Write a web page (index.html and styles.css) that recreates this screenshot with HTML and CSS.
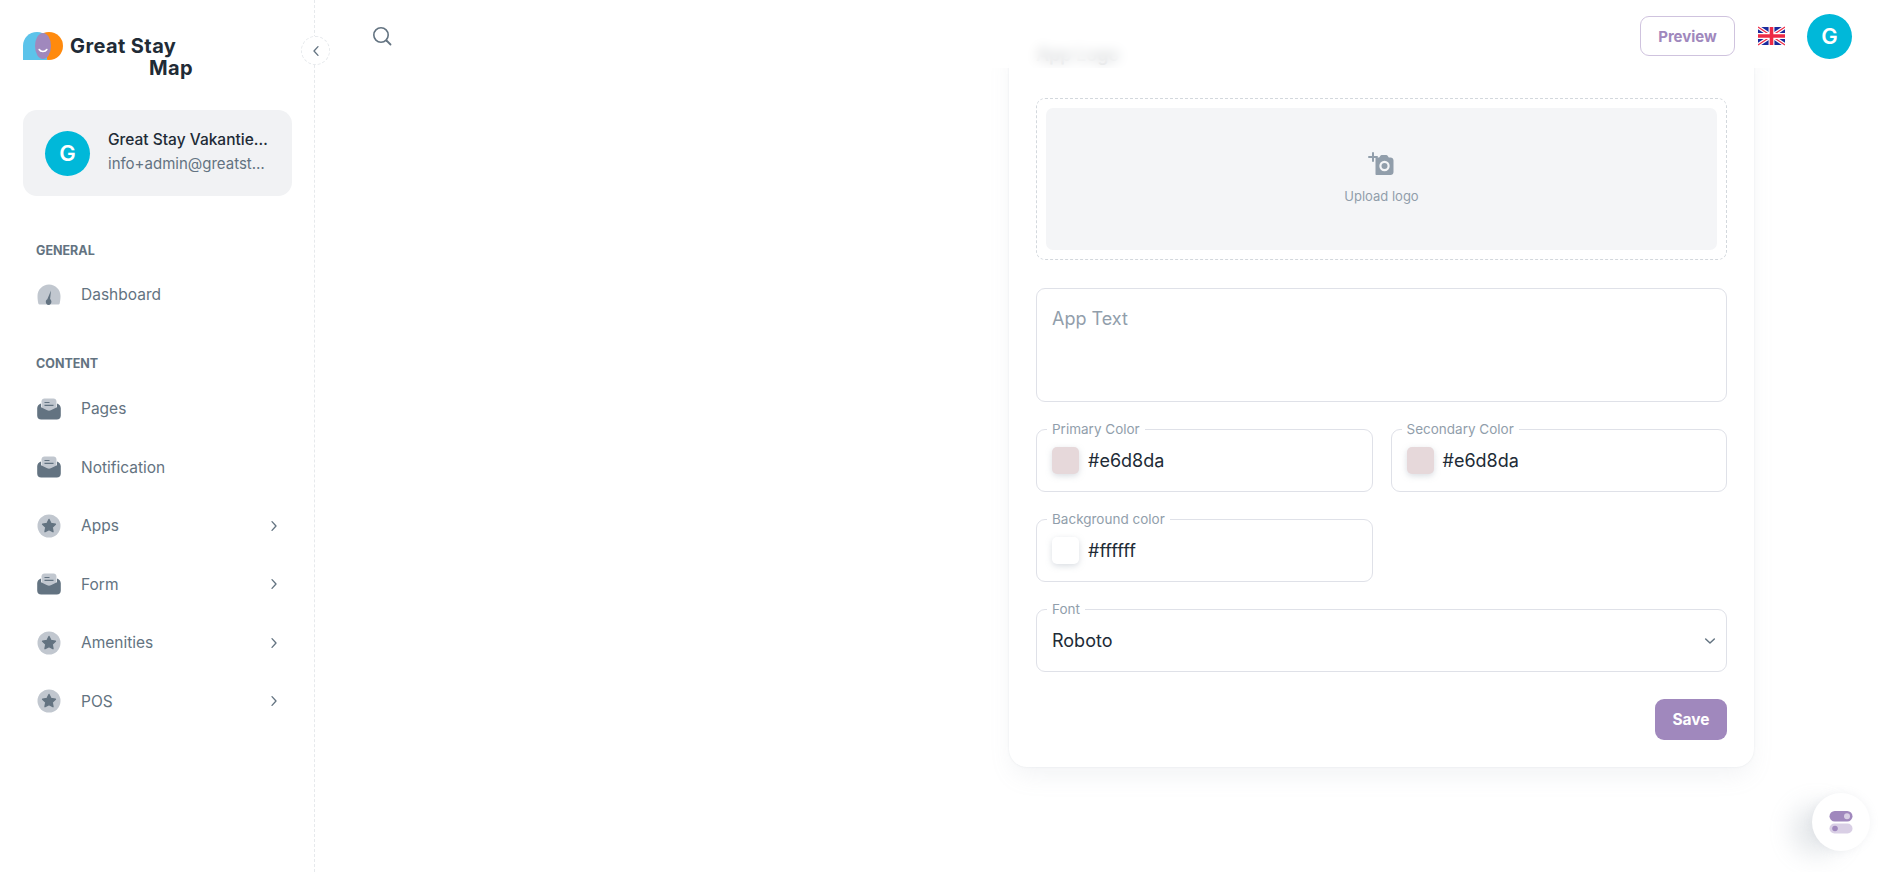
FILE: index.html
```html
<!DOCTYPE html>
<html lang="en">
<head>
    <meta charset="UTF-8">
    <meta name="viewport" content="width=device-width, initial-scale=1.0">
    <title>Great Stay Map</title>
    <link rel="stylesheet" href="styles.css">
</head>
<body>
    <svg class="icon-defs" width="0" height="0">
        <symbol id="icon-inbox" viewBox="0 0 24 24">
            <path fill="#c1c7cf" d="M4.500 4.500C4.500 2.800 5.800 1.500 7.500 1.500h9c1.700 0 3 1.300 3 3V15h-15z"/>
            <path fill="#637381" d="M7.500 5h5v1.100h-5zM7.500 7.800h9v1.100h-9z"/>
            <path fill="#637381" d="M4 6.500v3.800l6.200 3c1.100.6 2.500.6 3.600 0l6.200-3V6.500c2.200 1 3.800 2.400 3.800 4.700v7.300c0 2.500-1.500 4-4 4H4.200c-2.500 0-4-1.500-4-4v-7.300c0-2.300 1.600-3.700 3.800-4.700z"/>
        </symbol>
        <symbol id="icon-star" viewBox="0 0 24 24">
            <circle cx="12" cy="12" r="11.500" fill="#c1c7cf"/>
            <path fill="#637381" stroke="#637381" stroke-width="1.400" stroke-linejoin="round" d="M12 5.500l2 4 4.400.7-3.200 3.100.8 4.400-4-2.100-4 2.100.8-4.400-3.200-3.100 4.400-.7z"/>
        </symbol>
        <symbol id="icon-chevron" viewBox="0 0 24 24">
            <path fill="none" stroke="#637381" stroke-width="2" stroke-linecap="round" stroke-linejoin="round" d="M9 5.500l6 6.500-6 6.500"/>
        </symbol>
    </svg>

    <aside class="sidebar">
        <div class="brand">
            <svg class="brand-logo" width="40" height="28" viewBox="0 0 40 28">
                <path fill="#ff8a0d" d="M26 0a14 14 0 1 1 0 28 14 14 0 0 1 0-28z"/>
                <path fill="#5cc3ea" d="M14 0c4 0 8 2 10 4v24H0V14C0 6 6 0 14 0z"/>
                <ellipse cx="20" cy="14" rx="8" ry="13" fill="#a088bd"/>
                <path fill="none" stroke="#fff" stroke-width="1.600" stroke-linecap="round" d="M16.200 17.500c1.500 2.700 6 2.700 7.600 0"/>
            </svg>
            <div class="brand-name">
                <div>Great Stay</div>
                <div class="brand-line2">Map</div>
            </div>
        </div>

        <div class="account">
            <div class="avatar">G</div>
            <div class="account-text">
                <div class="account-name">Great Stay Vakantie Verhuur</div>
                <div class="account-mail">info+admin@greatstaymap.com</div>
            </div>
        </div>

        <nav class="nav">
            <div class="nav-title">GENERAL</div>
            <a class="nav-item">
                <svg class="nav-icon" viewBox="0 0 24 24">
                    <path fill="#c1c7cf" d="M12 1.500C5.600 1.500.5 6.700.5 13c0 3 .4 6 .9 7.800.2.500.6.700 1.100.7h19c.5 0 .9-.2 1.100-.7.5-1.800.9-4.800.9-7.800 0-6.300-5.100-11.500-11.500-11.500z"/>
                    <path fill="#637381" d="M14 7.500l-.9 8.600c.8.600 1.300 1.600 1.300 2.700 0 1.800-1.200 3.200-2.800 3.200s-2.800-1.400-2.800-3.200c0-1.100.6-2.100 1.500-2.600z"/>
                </svg>
                <span>Dashboard</span>
            </a>

            <div class="nav-title nav-title-next">CONTENT</div>
            <a class="nav-item">
                <svg class="nav-icon"><use href="#icon-inbox"/></svg>
                <span>Pages</span>
            </a>
            <a class="nav-item">
                <svg class="nav-icon"><use href="#icon-inbox"/></svg>
                <span>Notification</span>
            </a>
            <a class="nav-item">
                <svg class="nav-icon"><use href="#icon-star"/></svg>
                <span>Apps</span>
                <svg class="nav-arrow"><use href="#icon-chevron"/></svg>
            </a>
            <a class="nav-item">
                <svg class="nav-icon"><use href="#icon-inbox"/></svg>
                <span>Form</span>
                <svg class="nav-arrow"><use href="#icon-chevron"/></svg>
            </a>
            <a class="nav-item">
                <svg class="nav-icon"><use href="#icon-star"/></svg>
                <span>Amenities</span>
                <svg class="nav-arrow"><use href="#icon-chevron"/></svg>
            </a>
            <a class="nav-item">
                <svg class="nav-icon"><use href="#icon-star"/></svg>
                <span>POS</span>
                <svg class="nav-arrow"><use href="#icon-chevron"/></svg>
            </a>
        </nav>

        <button class="collapse" type="button" aria-label="Collapse">
            <svg width="16" height="16" viewBox="0 0 24 24">
                <path fill="none" stroke="#637381" stroke-width="2" stroke-linecap="round" stroke-linejoin="round" d="M15 5.500L9 12l6 6.500"/>
            </svg>
        </button>
    </aside>

    <main class="main">
        <header class="topbar">
            <svg width="20" height="20" viewBox="0 0 20 20">
                <circle cx="9" cy="9" r="7.200" fill="none" stroke="#637381" stroke-width="1.600"/>
                <path d="M14.500 14.500L18.500 18.500" stroke="#637381" stroke-width="1.800" stroke-linecap="round"/>
            </svg>
            <div class="topbar-right">
                <button class="btn-preview" type="button">Preview</button>
                <svg class="flag" width="27" height="20" viewBox="0 0 60 40">
                    <rect width="60" height="40" fill="#1a2a9c"/>
                    <path d="M0 0L60 40M60 0L0 40" stroke="#fff" stroke-width="8"/>
                    <path d="M0 0L60 40M60 0L0 40" stroke="#ee2a45" stroke-width="2.500"/>
                    <path d="M30 0V40M0 20H60" stroke="#fff" stroke-width="13"/>
                    <path d="M30 0V40M0 20H60" stroke="#ee2a45" stroke-width="8"/>
                </svg>
                <div class="avatar">G</div>
            </div>
        </header>

        <section class="card">
            <h2 class="card-title">App Logo</h2>

            <div class="upload">
                <div class="upload-inner">
                    <svg width="27" height="24" viewBox="0 0 27 24">
                        <path fill="#919eab" d="M8.500 7c0-.6.4-1 1-1h2.700l1.200-1.800c.3-.5.8-.7 1.300-.7h4.600c.5 0 1 .2 1.300.7L21.800 6h1.700c1.700 0 3 1.300 3 3v11.500c0 1.700-1.300 3-3 3h-14c-.6 0-1-.4-1-1z" transform="translate(-1 -.5)"/>
                        <circle cx="16.500" cy="14" r="5.200" fill="#f4f5f7"/>
                        <circle cx="16.500" cy="14" r="3" fill="#919eab"/>
                        <path d="M5 1v8M1 5h8" stroke="#919eab" stroke-width="2" stroke-linecap="round"/>
                    </svg>
                    <span>Upload logo</span>
                </div>
            </div>

            <div class="textarea">App Text</div>

            <div class="color-grid">
                <div class="field">
                    <label class="field-label">Primary Color</label>
                    <span class="swatch swatch-rose"></span>
                    <span class="field-value">#e6d8da</span>
                </div>
                <div class="field">
                    <label class="field-label">Secondary Color</label>
                    <span class="swatch swatch-rose"></span>
                    <span class="field-value">#e6d8da</span>
                </div>
                <div class="field">
                    <label class="field-label">Background color</label>
                    <span class="swatch swatch-white"></span>
                    <span class="field-value">#ffffff</span>
                </div>
            </div>

            <div class="field field-select">
                <label class="field-label">Font</label>
                <span class="field-value">Roboto</span>
                <svg width="16" height="16" viewBox="0 0 24 24">
                    <path fill="none" stroke="#637381" stroke-width="2.200" stroke-linecap="round" stroke-linejoin="round" d="M5.500 9l6.500 6 6.500-6"/>
                </svg>
            </div>

            <div class="card-actions">
                <button class="btn-save" type="button">Save</button>
            </div>
        </section>

        <button class="settings" type="button" aria-label="Settings">
            <svg width="24" height="24" viewBox="0 0 24 24">
                <rect x="0.500" y="1" width="23" height="10.500" rx="5.250" fill="#a088bd"/>
                <circle cx="18" cy="6.250" r="3" fill="#d9cfe5"/>
                <rect x="0.500" y="13.500" width="23" height="10" rx="5" fill="#d9cfe5"/>
                <circle cx="6" cy="18.500" r="2.800" fill="#a088bd"/>
            </svg>
        </button>
    </main>
</body>
</html>
```

FILE: styles.css
```css
* {
    box-sizing: border-box;
}
html, body {
    height: 100%;
}
body {
    margin: 0;
    display: flex;
    height: 872px;
    overflow: hidden;
    background: #ffffff;
    color: #212b36;
    font-family: "Inter", "Liberation Sans", sans-serif;
    font-size: 15px;
}
.icon-defs {
    position: absolute;
}
button {
    font-family: inherit;
    cursor: pointer;
}

/* sidebar */
.sidebar {
    position: relative;
    z-index: 3;
    flex: 0 0 315px;
    width: 315px;
    min-width: 0;
    padding: 32px 22px 0 23px;
    border-right: 1px dashed #e6e9ec;
}
.brand {
    display: flex;
    gap: 7px;
    height: 78px;
}
.brand-logo {
    flex: none;
}
.brand-name {
    font-size: 20px;
    font-weight: 700;
    line-height: 22px;
    letter-spacing: 0.4px;
    padding-top: 3px;
}
.brand-line2 {
    padding-left: 79px;
}
.avatar {
    flex: none;
    display: flex;
    align-items: center;
    justify-content: center;
    width: 45px;
    height: 45px;
    border-radius: 50%;
    background: #00b8d9;
    color: #ffffff;
    font-size: 22px;
    font-weight: 600;
}
.account {
    display: flex;
    align-items: center;
    gap: 18px;
    height: 86px;
    padding: 0 22px;
    border-radius: 14px;
    background: #f1f2f4;
}
.account-text {
    min-width: 0;
    padding-bottom: 2px;
}
.account-name, .account-mail {
    overflow: hidden;
    white-space: nowrap;
    text-overflow: ellipsis;
}
.account-name {
    font-size: 15.500px;
    font-weight: 500;
    line-height: 24px;
}
.account-mail {
    font-size: 15px;
    line-height: 24px;
    color: #637381;
}
.nav {
    padding-top: 45px;
}
.nav-title {
    height: 20px;
    margin-bottom: 6.500px;
    padding-left: 13px;
    font-size: 12.500px;
    font-weight: 700;
    line-height: 20px;
    color: #637381;
}
.nav-title-next {
    margin-top: 32.500px;
    margin-bottom: 7.500px;
}
.nav-item {
    display: flex;
    align-items: center;
    height: 54px;
    margin-bottom: 4.500px;
    padding-left: 14px;
    font-size: 15.500px;
    color: #637381;
}
.nav-item span {
    flex: 1;
    margin-left: 20px;
}
.nav-icon {
    flex: none;
    width: 24px;
    height: 24px;
}
.nav-arrow {
    flex: none;
    width: 16px;
    height: 16px;
    margin-right: 10px;
}
.collapse {
    position: absolute;
    top: 36px;
    right: -16px;
    display: flex;
    align-items: center;
    justify-content: center;
    width: 29px;
    height: 29px;
    padding: 0;
    border: 1px dashed #e6e9ec;
    border-radius: 50%;
    background: #ffffff;
}

/* main area */
.main {
    position: relative;
    flex: 1;
    min-width: 0;
    padding: 30px 141px 0 0;
    display: flex;
    justify-content: flex-end;
    align-items: flex-start;
}
.topbar {
    position: absolute;
    top: 0;
    left: 0;
    right: 0;
    z-index: 2;
    display: flex;
    align-items: center;
    justify-content: space-between;
    height: 68px;
    padding: 4px 43px 0 57px;
    background: rgba(255, 255, 255, 0.8);
    backdrop-filter: blur(6px);
}
.topbar-right {
    display: flex;
    align-items: center;
    gap: 22px;
}
.btn-preview {
    width: 95px;
    height: 40px;
    margin-right: 1px;
    border: 1px solid #cfc3de;
    border-radius: 9px;
    background: #ffffff;
    color: #a088bd;
    font-size: 15px;
    font-weight: 700;
}
.card {
    width: 745px;
    padding: 11px 27px 27px;
    border-radius: 18px;
    background: #ffffff;
    box-shadow: 0 0 2px rgba(145, 158, 171, 0.2), 0 12px 24px -4px rgba(145, 158, 171, 0.12);
}
.card-title {
    margin: 0 0 30px;
    font-size: 18px;
    font-weight: 600;
    line-height: 27px;
}
.upload {
    padding: 9px;
    border: 1px dashed #d3d8dd;
    border-radius: 9px;
}
.upload-inner {
    display: flex;
    flex-direction: column;
    align-items: center;
    justify-content: center;
    gap: 12px;
    height: 142px;
    padding-bottom: 2px;
    border-radius: 7px;
    background: #f4f5f7;
    font-size: 13px;
    color: #919eab;
}
.textarea {
    height: 114px;
    margin-top: 28px;
    padding: 16px 15px;
    border: 1px solid #dfe1e8;
    border-radius: 9px;
    font-size: 18px;
    line-height: 27px;
    color: #919eab;
}
.color-grid {
    display: grid;
    grid-template-columns: 1fr 1fr;
    gap: 27px 18px;
    margin-top: 27px;
}
.field {
    position: relative;
    display: flex;
    align-items: center;
    height: 63px;
    padding: 0 15px;
    border: 1px solid #dfe1e8;
    border-radius: 9px;
}
.field-label {
    position: absolute;
    top: -9px;
    left: 10px;
    padding: 0 5px;
    background: #ffffff;
    font-size: 13.500px;
    line-height: 16px;
    color: #919eab;
}
.field-value {
    margin-left: 9px;
    font-size: 18px;
    color: #212b36;
}
.swatch {
    flex: none;
    width: 27px;
    height: 27px;
    border-radius: 5px;
    box-shadow: 0 2px 6px rgba(145, 158, 171, 0.35);
}
.swatch-rose {
    background: #e6d8da;
}
.swatch-white {
    background: #ffffff;
}
.field-select {
    justify-content: space-between;
    margin-top: 27px;
    padding-right: 8px;
}
.field-select .field-value {
    margin-left: 0;
}
.card-actions {
    display: flex;
    justify-content: flex-end;
    margin-top: 27px;
}
.btn-save {
    width: 72px;
    height: 41px;
    border: none;
    border-radius: 9px;
    background: #a088bd;
    color: #ffffff;
    font-size: 15.500px;
    font-weight: 700;
}
.settings {
    position: absolute;
    top: 793px;
    right: 25px;
    display: flex;
    align-items: center;
    justify-content: center;
    width: 58px;
    height: 58px;
    padding: 0;
    border: none;
    border-radius: 50%;
    background: #ffffff;
    box-shadow: 0 0 10px rgba(145, 158, 171, 0.12), -24px 8px 24px -4px rgba(145, 158, 171, 0.24);
}
```
